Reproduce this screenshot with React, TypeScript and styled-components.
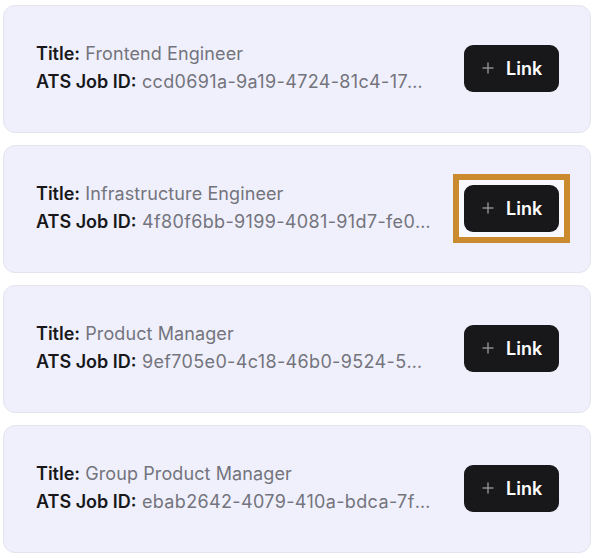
import React from 'react';
import styled, { createGlobalStyle } from 'styled-components';

const GlobalStyle = createGlobalStyle`
  body {
    margin: 0;
    background: #ffffff;
    font-family: Inter, "Noto Sans", sans-serif;
  }
`;

const List = styled.div`
  display: flex;
  flex-direction: column;
  gap: 12px;
  padding: 5px 7px 6px 3px;
`;

const Card = styled.div`
  display: flex;
  align-items: center;
  justify-content: space-between;
  height: 128px;
  box-sizing: border-box;
  padding: 0 31px 2px 32px;
  background: #eff0fc;
  border: 1px solid #e3e4ee;
  border-radius: 12px;
`;

const Info = styled.div`
  display: flex;
  flex-direction: column;
  width: 395px;
  font-size: 18px;
  line-height: 28px;
`;

const Line = styled.div<{ $spacing: number }>`
  white-space: nowrap;
  overflow: hidden;
  text-overflow: ellipsis;
  color: #74747c;
  letter-spacing: ${(p) => p.$spacing}px;
`;

const Label = styled.span`
  font-weight: 600;
  color: #18181b;
  letter-spacing: 0;
`;

const FocusRing = styled.span`
  display: inline-flex;
  margin: -11px;
  padding: 5px;
  border: 6px solid #cc8a2f;
  background: #f8f8fd;
`;

const LinkButton = styled.button`
  display: flex;
  align-items: center;
  gap: 12px;
  width: 95px;
  height: 47px;
  box-sizing: border-box;
  padding: 0 16px 0 18px;
  border: none;
  border-radius: 9px;
  background: #18181b;
  color: #ffffff;
  font-family: Inter, "Noto Sans", sans-serif;
  font-size: 18px;
  font-weight: 600;
  cursor: pointer;
`;

const PlusIcon = () => (
  <svg width="12" height="12" viewBox="0 0 12 12" fill="none">
    <path d="M6 1v10M1 6h10" stroke="#8b8b90" strokeWidth="1.5" strokeLinecap="round" />
  </svg>
);

const jobs = [
  { title: 'Frontend Engineer', id: 'ccd0691a-9a19-4724-81c4-17a3b2e5c9d0' },
  { title: 'Infrastructure Engineer', id: '4f80f6bb-9199-4081-91d7-fe0c12a4b7e3' },
  { title: 'Product Manager', id: '9ef705e0-4c18-46b0-9524-5d8e1f3a6b29' },
  { title: 'Group Product Manager', id: 'ebab2642-4079-410a-bdca-7f2c9e4d1a58' },
];

const App = () => {
  return (
    <>
      <GlobalStyle />
      <List>
        {jobs.map((job, i) => {
          const button = (
            <LinkButton>
              <PlusIcon />
              Link
            </LinkButton>
          );
          return (
            <Card key={job.id}>
              <Info>
                <Line $spacing={0.1}>
                  <Label>Title:</Label> {job.title}
                </Line>
                <Line $spacing={0.35}>
                  <Label>ATS Job ID:</Label> {job.id}
                </Line>
              </Info>
              {i === 1 ? <FocusRing>{button}</FocusRing> : button}
            </Card>
          );
        })}
      </List>
    </>
  );
};

export default App;
